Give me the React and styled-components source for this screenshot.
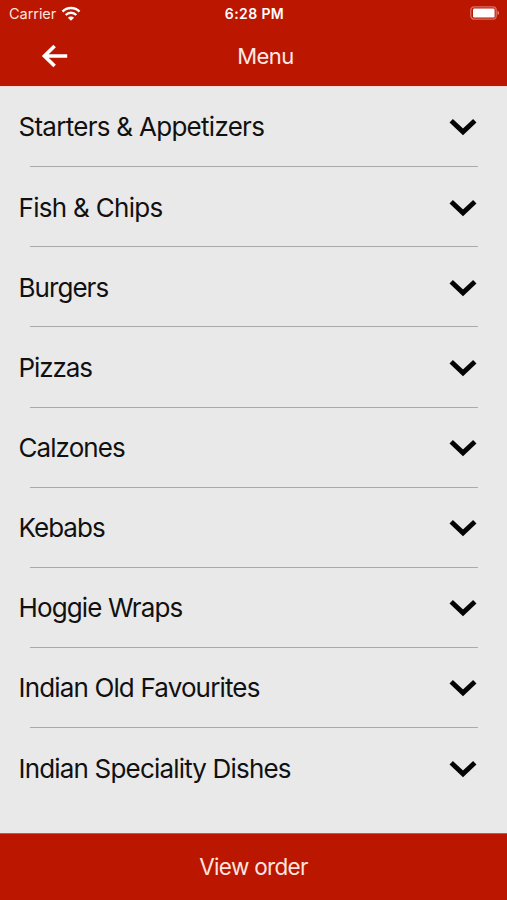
import React from 'react'
import styled, { createGlobalStyle } from 'styled-components'

const categories = [
  { name: 'Starters & Appetizers', spacing: -0.72 },
  { name: 'Fish & Chips', spacing: -0.7 },
  { name: 'Burgers', spacing: -0.95 },
  { name: 'Pizzas', spacing: -1.1 },
  { name: 'Calzones', spacing: -0.93 },
  { name: 'Kebabs', spacing: -0.97 },
  { name: 'Hoggie Wraps', spacing: -0.87 },
  { name: 'Indian Old Favourites', spacing: -0.85 },
  { name: 'Indian Speciality Dishes', spacing: -0.82 },
]

const WifiIcon = () => (
  <svg width='20' height='16' viewBox='0 0 20 16' fill='none' stroke='#fff' strokeWidth='2.4'>
    <path d='M1.5 5.6a12 12 0 0 1 17 0' />
    <path d='M4.7 9a7.5 7.5 0 0 1 10.6 0' />
    <path d='M10 14.8l-3.1-3.1a4.4 4.4 0 0 1 6.2 0z' fill='#fff' stroke='none' />
  </svg>
)

const BatteryIcon = () => (
  <svg width='30' height='14' viewBox='0 0 30 14'>
    <rect x='0.8' y='0.8' width='25.4' height='12.4' rx='3.4' fill='none' stroke='#dc6f64' strokeWidth='1.3' />
    <rect x='3' y='2.6' width='21.6' height='8.8' rx='1.2' fill='#fff' />
    <path d='M27.5 4.8c2 .6 2 3.8 0 4.4z' fill='#e2837a' />
  </svg>
)

const BackIcon = () => (
  <svg width='28' height='26' viewBox='0 0 28 26' fill='none' stroke='#fff' strokeWidth='3.6'>
    <path d='M26.2 13H4M13.6 3L3.4 13l10.2 10' />
  </svg>
)

const ChevronIcon = () => (
  <svg width='28' height='18' viewBox='0 0 28 18' fill='none' stroke='#050505' strokeWidth='4.9'>
    <path d='M2.2 2.8L14 13.9 25.8 2.8' />
  </svg>
)

export default function App() {
  return (
    <Screen>
      <GlobalStyle />
      <StatusBar>
        <Carrier>
          <span>Carrier</span>
          <WifiIcon />
        </Carrier>
        <Clock>6:28 PM</Clock>
        <Battery>
          <BatteryIcon />
        </Battery>
      </StatusBar>
      <Header>
        <BackButton aria-label='Back'>
          <BackIcon />
        </BackButton>
        <Title>Menu</Title>
      </Header>
      <List>
        {categories.map((item) => (
          <Row key={item.name}>
            <Label $spacing={item.spacing}>{item.name}</Label>
            <ChevronIcon />
          </Row>
        ))}
      </List>
      <OrderButton>View order</OrderButton>
    </Screen>
  )
}

const GlobalStyle = createGlobalStyle`
  body {
    margin: 0;
    background: #e9e9e9;
  }
  * {
    box-sizing: border-box;
  }
  svg {
    display: block;
    flex-shrink: 0;
  }
`

const Screen = styled.div`
  display: flex;
  flex-direction: column;
  height: 900px;
  background: #e9e9e9;
  font-family: Inter, 'Liberation Sans', sans-serif;
`

const StatusBar = styled.div`
  display: grid;
  grid-template-columns: 1fr auto 1fr;
  align-items: center;
  height: 27px;
  padding: 0 7px 0 9px;
  background: #ba1600;
  color: #fff;
`

const Carrier = styled.div`
  display: flex;
  align-items: center;
  gap: 5px;
  font-size: 14.5px;
  letter-spacing: -0.05px;
  color: #ffe4df;
`

const Clock = styled.div`
  font-size: 14px;
  font-weight: 600;
  letter-spacing: 0.4px;
`

const Battery = styled.div`
  display: flex;
  justify-content: flex-end;
  padding-bottom: 1px;
`

const Header = styled.header`
  display: grid;
  grid-template-columns: 80px 1fr 80px;
  align-items: center;
  height: 59px;
  padding-bottom: 1px;
  background: #ba1600;
  color: #ffe9e5;
`

const BackButton = styled.button`
  display: flex;
  justify-content: flex-end;
  padding: 0 11px 0 0;
  border: 0;
  background: none;
`

const Title = styled.h1`
  margin: 0 -24px 0 0;
  text-align: center;
  font-size: 22px;
  font-weight: 400;
  letter-spacing: -0.5px;
`

const List = styled.ul`
  flex: 1;
  margin: 0;
  padding: 0;
  list-style: none;
  border-top: 1px solid #f6dedb;
`

const Row = styled.li`
  display: flex;
  align-items: center;
  justify-content: space-between;
  height: 80.17px;
  padding: 0.6px 30px 0 18.5px;
  background: linear-gradient(#aaa, #aaa) 30px 100% / 448px 1px no-repeat;

  &:last-child {
    background: none;
  }
`

const Label = styled.span`
  font-size: 26px;
  line-height: 32px;
  color: #111;
  white-space: nowrap;
  letter-spacing: ${(props) => props.$spacing}px;
`

const OrderButton = styled.button`
  height: 67px;
  padding: 0 0 2px;
  border: 0;
  border-top: 1px solid #c8574a;
  background: #ba1600;
  color: #ffe4df;
  font-family: inherit;
  font-size: 22.5px;
  letter-spacing: -0.7px;
`
